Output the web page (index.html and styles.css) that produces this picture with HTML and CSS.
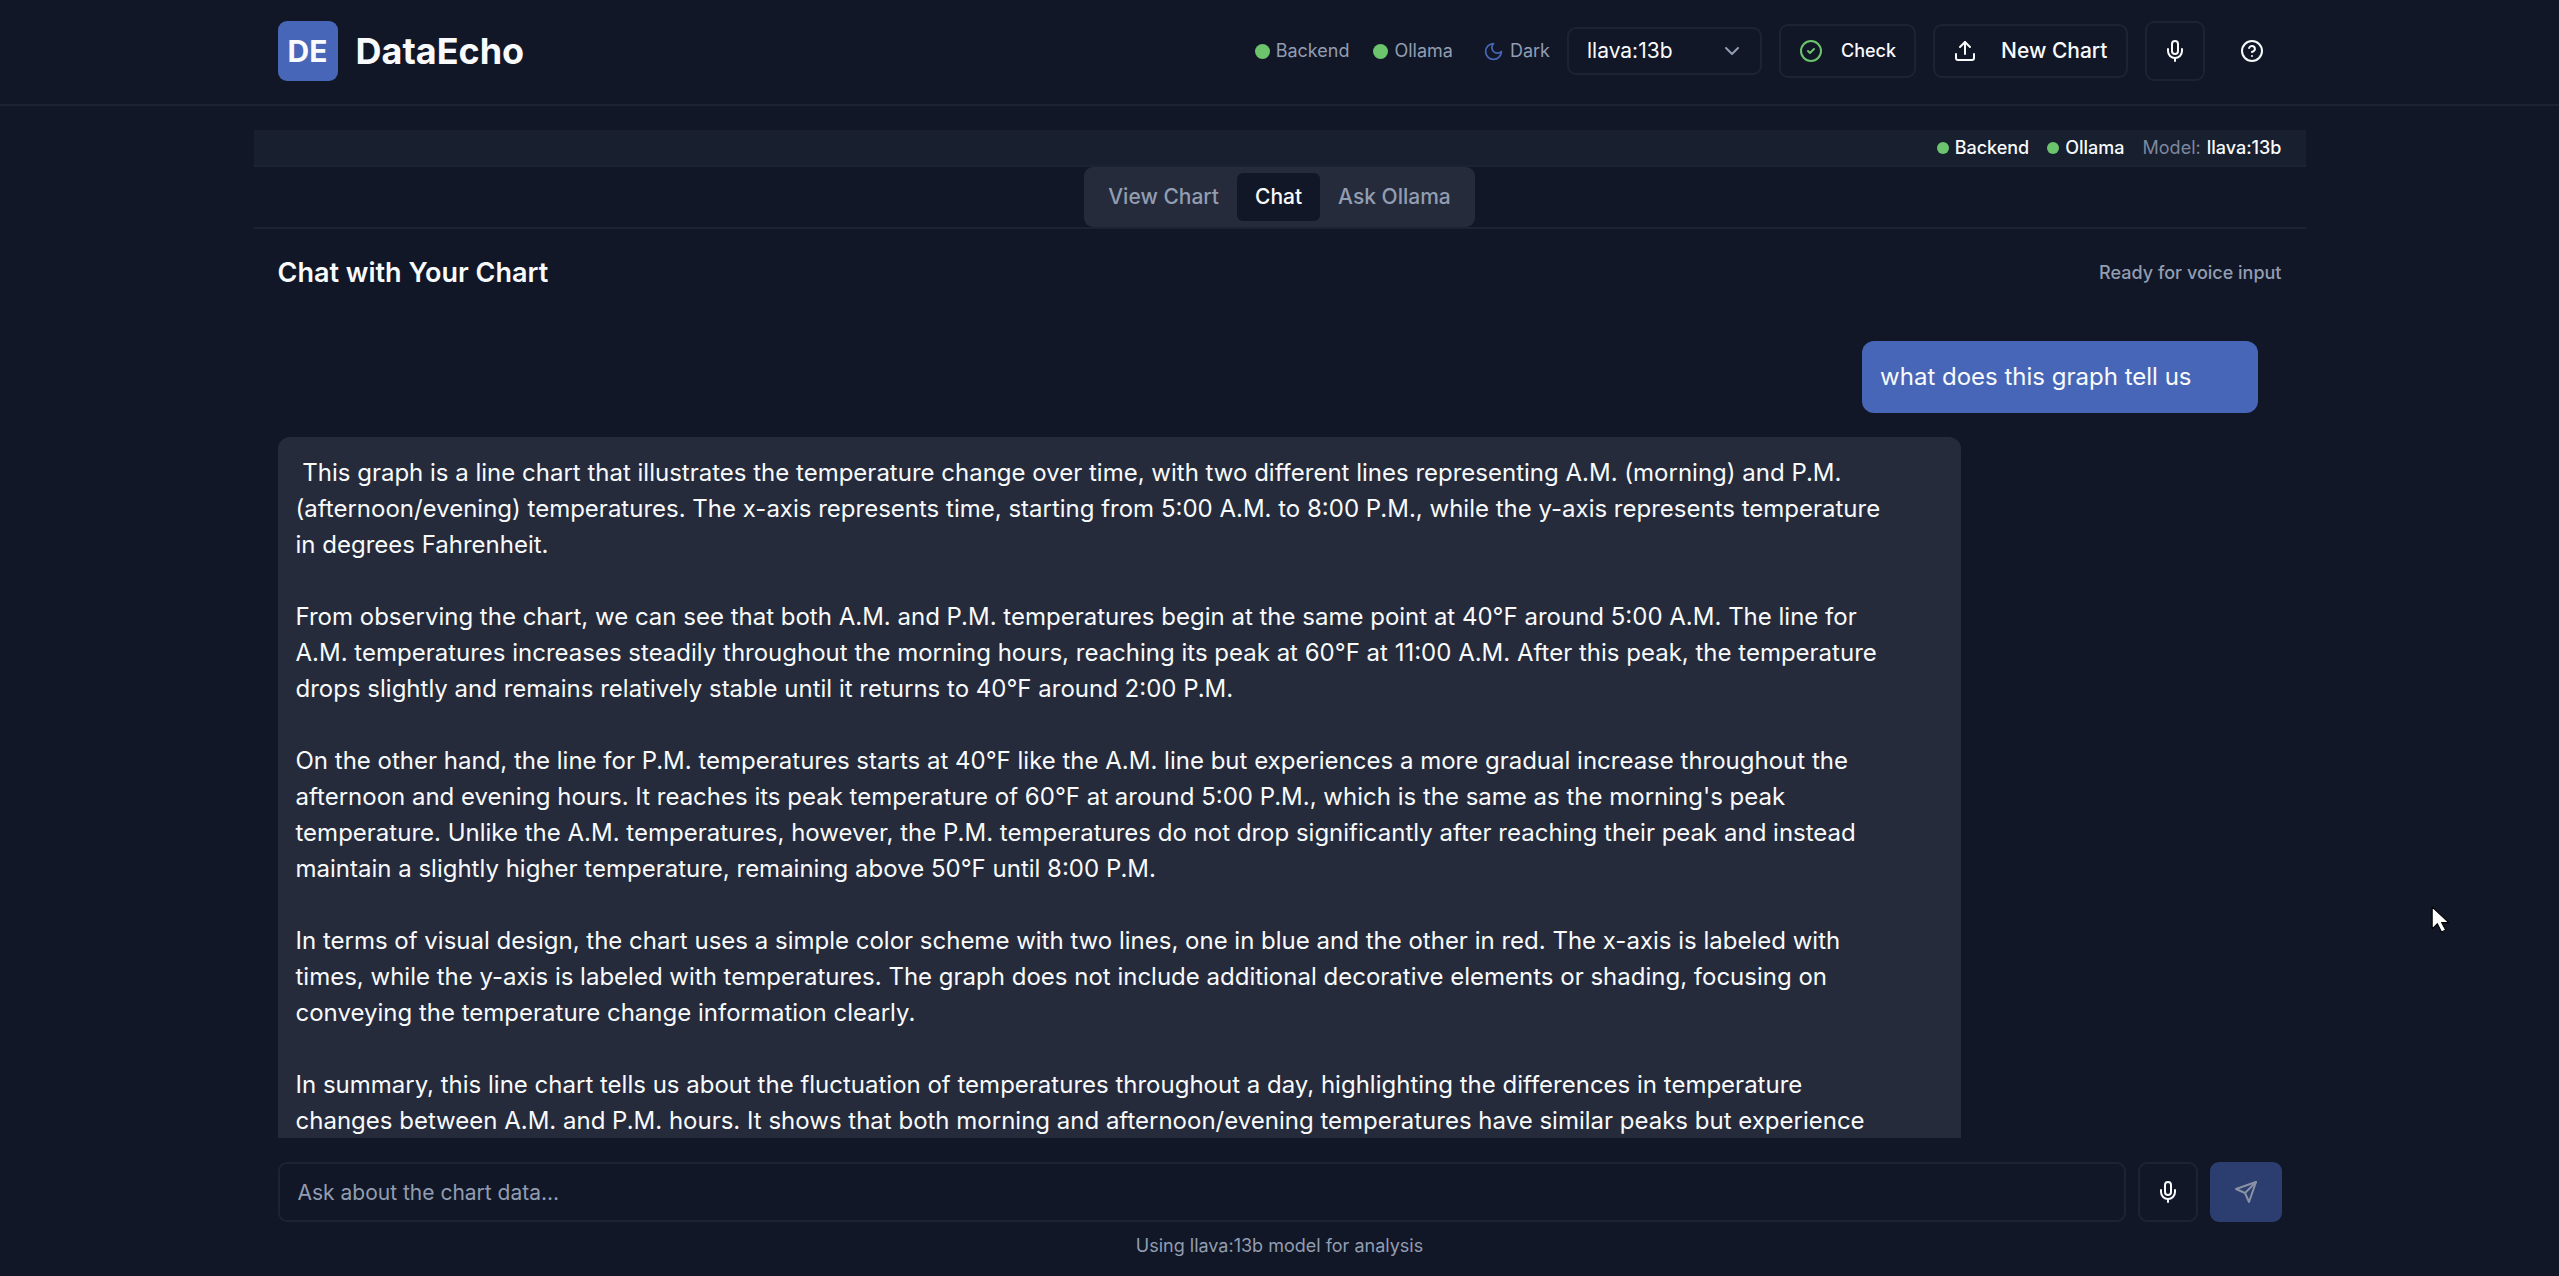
FILE: index.html
```html
<!DOCTYPE html>
<html lang="en">
<head>
<meta charset="utf-8">
<meta name="viewport" content="width=device-width, initial-scale=1">
<title>DataEcho</title>
<link rel="stylesheet" href="styles.css">
</head>
<body>
<div class="app">
  <header class="topbar">
    <div class="container topbar-inner">
      <div class="brand">
        <div class="brand-mark">DE</div>
        <h1 class="brand-name">DataEcho</h1>
      </div>
      <div class="tools">
        <div class="indicators">
          <span class="indicator"><span class="dot"></span>Backend</span>
          <span class="indicator"><span class="dot"></span>Ollama</span>
          <button class="theme" type="button">
            <svg class="icon-sm" viewBox="0 0 24 24"><path d="M12 3a6 6 0 0 0 9 9 9 9 0 1 1-9-9Z"/></svg>
            Dark
          </button>
        </div>
        <div class="select">
          <select class="select-field" aria-label="Model"><option>llava:13b</option></select>
          <svg class="select-arrow" viewBox="0 0 24 24"><path d="m6 9 6 6 6-6"/></svg>
        </div>
        <button class="btn btn-check" type="button">
          <svg class="icon icon-ok" viewBox="0 0 24 24"><circle cx="12" cy="12" r="10"/><path d="m9 12 2 2 4-4"/></svg>
          Check
        </button>
        <button class="btn btn-upload" type="button">
          <svg class="icon" viewBox="0 0 24 24"><path d="M21 15v4a2 2 0 0 1-2 2H5a2 2 0 0 1-2-2v-4"/><path d="m17 8-5-5-5 5"/><path d="M12 3v12"/></svg>
          New Chart
        </button>
        <button class="btn btn-icon" type="button" aria-label="Voice commands">
          <svg class="icon" viewBox="0 0 24 24"><path d="M12 2a3 3 0 0 0-3 3v7a3 3 0 0 0 6 0V5a3 3 0 0 0-3-3Z"/><path d="M19 10v2a7 7 0 0 1-14 0v-2"/><path d="M12 19v3"/></svg>
        </button>
        <button class="btn btn-icon btn-ghost" type="button" aria-label="Help">
          <svg class="icon" viewBox="0 0 24 24"><circle cx="12" cy="12" r="10"/><path d="M9.09 9a3 3 0 0 1 5.83 1c0 2-3 3-3 3"/><path d="M12 17h.01"/></svg>
        </button>
      </div>
    </div>
  </header>

  <main class="container main">
    <div class="statusbar">
      <span class="status"><span class="dot dot-sm"></span>Backend</span>
      <span class="status"><span class="dot dot-sm"></span>Ollama</span>
      <span class="status"><span class="status-label">Model:</span>llava:13b</span>
    </div>
    <div class="tabs">
      <div class="tablist" role="tablist">
        <button class="tab" type="button" role="tab">View Chart</button>
        <button class="tab tab-active" type="button" role="tab" aria-selected="true">Chat</button>
        <button class="tab" type="button" role="tab">Ask Ollama</button>
      </div>
    </div>
    <section class="chat">
      <div class="chat-head">
        <h2 class="chat-title">Chat with Your Chart</h2>
        <span class="voice-state">Ready for voice input</span>
      </div>
      <div class="messages">
        <div class="message message-user">what does this graph tell us</div>
        <div class="message message-bot"> This graph is a line chart that illustrates the temperature change over time, with two different lines representing A.M. (morning) and P.M. (afternoon/evening) temperatures. The x-axis represents time, starting from 5:00 A.M. to 8:00 P.M., while the y-axis represents temperature in degrees Fahrenheit.

From observing the chart, we can see that both A.M. and P.M. temperatures begin at the same point at 40°F around 5:00 A.M. The line for A.M. temperatures increases steadily throughout the morning hours, reaching its peak at 60°F at 11:00 A.M. After this peak, the temperature drops slightly and remains relatively stable until it returns to 40°F around 2:00 P.M.

On the other hand, the line for P.M. temperatures starts at 40°F like the A.M. line but experiences a more gradual increase throughout the afternoon and evening hours. It reaches its peak temperature of 60°F at around 5:00 P.M., which is the same as the morning's peak temperature. Unlike the A.M. temperatures, however, the P.M. temperatures do not drop significantly after reaching their peak and instead maintain a slightly higher temperature, remaining above 50°F until 8:00 P.M.

In terms of visual design, the chart uses a simple color scheme with two lines, one in blue and the other in red. The x-axis is labeled with times, while the y-axis is labeled with temperatures. The graph does not include additional decorative elements or shading, focusing on conveying the temperature change information clearly.

In summary, this line chart tells us about the fluctuation of temperatures throughout a day, highlighting the differences in temperature changes between A.M. and P.M. hours. It shows that both morning and afternoon/evening temperatures have similar peaks but experience</div>
      </div>
      <form class="composer">
        <input class="prompt" type="text" placeholder="Ask about the chart data..." aria-label="Ask about the chart data">
        <button class="btn btn-icon" type="button" aria-label="Voice input">
          <svg class="icon" viewBox="0 0 24 24"><path d="M12 2a3 3 0 0 0-3 3v7a3 3 0 0 0 6 0V5a3 3 0 0 0-3-3Z"/><path d="M19 10v2a7 7 0 0 1-14 0v-2"/><path d="M12 19v3"/></svg>
        </button>
        <button class="btn btn-send" type="submit" aria-label="Send" disabled>
          <svg class="icon" viewBox="0 0 24 24"><path d="m22 2-7 20-4-9-9-4Z"/><path d="M22 2 11 13"/></svg>
        </button>
      </form>
      <p class="footnote">Using llava:13b model for analysis</p>
    </section>
  </main>
</div>
<svg class="pointer" viewBox="0 0 18 26" aria-hidden="true"><path d="M1 1v21l5-5 4 8 4-2-4-7h7Z"/></svg>
</body>
</html>
```
FILE: styles.css
```css
:root {
  --bg: #111726;
  --bar: #181f2e;
  --muted: #252b3b;
  --line: #1c2333;
  --text: #f8fafc;
  --text-muted: #929db2;
  --primary: #4866b7;
  --ok: #6cc46c;
}

* { box-sizing: border-box; }

body {
  margin: 0;
  background: var(--bg);
  color: var(--text);
  font: 24px/36px Inter, "Liberation Sans", sans-serif;
}

button, input, select { font: inherit; color: inherit; }
h1, h2, p { margin: 0; }

.app {
  display: flex;
  flex-direction: column;
  height: 100vh;
}

.container {
  width: 100%;
  max-width: 2100px;
  margin: 0 auto;
}

.topbar { border-bottom: 2px solid var(--line); }

.topbar-inner {
  display: flex;
  align-items: center;
  justify-content: space-between;
  padding: 21px 48px 23px;
}

.brand {
  display: flex;
  align-items: center;
  gap: 18px;
}

.brand-mark {
  display: grid;
  place-items: center;
  width: 60px;
  height: 60px;
  border-radius: 9px;
  background: var(--primary);
  font-size: 30px;
  font-weight: 700;
}

.brand-name {
  font-size: 36px;
  font-weight: 700;
}

.tools {
  display: flex;
  align-items: center;
  gap: 17px;
}

.indicators {
  display: flex;
  align-items: center;
  gap: 24px;
  color: var(--text-muted);
  font-size: 18px;
  line-height: 24px;
}

.indicator, .theme {
  display: flex;
  align-items: center;
  gap: 6px;
}

.theme {
  margin-left: 6px;
  padding: 0;
  border: 0;
  background: none;
}

.dot {
  width: 15px;
  height: 15px;
  border-radius: 50%;
  background: var(--ok);
}

.dot-sm {
  width: 12px;
  height: 12px;
}

svg {
  fill: none;
  stroke: currentColor;
  stroke-width: 2;
  stroke-linecap: round;
  stroke-linejoin: round;
}

.icon {
  width: 24px;
  height: 24px;
}

.icon-ok { color: var(--ok); }

.icon-sm {
  width: 21px;
  height: 21px;
  color: var(--primary);
}

.select {
  display: grid;
  align-items: center;
  width: 195px;
}

.select-field, .select-arrow { grid-area: 1 / 1; }

.select-field {
  height: 48px;
  padding: 0 18px;
  border: 2px solid var(--line);
  border-radius: 9px;
  background: var(--bg);
  font-size: 21px;
  appearance: none;
}

.select-arrow {
  justify-self: end;
  width: 24px;
  height: 24px;
  margin-right: 18px;
  color: var(--text-muted);
  pointer-events: none;
}

.btn {
  display: flex;
  align-items: center;
  justify-content: center;
  height: 54px;
  padding: 0 18px;
  border: 2px solid var(--line);
  border-radius: 9px;
  background: none;
  font-size: 21px;
  font-weight: 500;
}

.btn-check {
  gap: 18px;
  font-size: 18px;
}

.btn-upload { gap: 24px; }

.btn-icon {
  width: 60px;
  height: 60px;
  padding: 0;
}

.btn-ghost { border-color: transparent; }

.main {
  display: flex;
  flex: 1;
  flex-direction: column;
  min-height: 0;
  padding: 24px 24px 0;
}

.statusbar {
  display: flex;
  justify-content: flex-end;
  gap: 18px;
  padding: 6px 24px 5px;
  border-bottom: 2px solid var(--line);
  background: var(--bar);
  font-size: 18px;
  font-weight: 500;
  line-height: 24px;
}

.status {
  display: flex;
  align-items: center;
  gap: 6px;
}

.status-label {
  color: #7d889e;
  font-weight: 400;
}

.tabs {
  display: flex;
  justify-content: center;
  border-bottom: 2px solid var(--line);
}

.tablist {
  display: flex;
  padding: 6px;
  border-radius: 9px;
  background: var(--muted);
}

.tab {
  height: 48px;
  padding: 0 18px;
  border: 0;
  border-radius: 6px;
  background: none;
  color: var(--text-muted);
  font-size: 21px;
  font-weight: 500;
}

.tab-active {
  background: var(--bg);
  color: var(--text);
}

.chat {
  display: flex;
  flex: 1;
  flex-direction: column;
  min-height: 0;
  padding: 24px;
  padding-bottom: 18px;
}

.chat-head {
  display: flex;
  align-items: center;
  justify-content: space-between;
  padding-bottom: 24px;
}

.chat-title {
  font-size: 27px;
  font-weight: 600;
  line-height: 40px;
}

.voice-state {
  color: var(--text-muted);
  font-size: 18px;
  font-weight: 500;
}

.messages {
  display: flex;
  flex: 1;
  flex-direction: column;
  gap: 24px;
  min-height: 0;
  padding: 24px 24px 0 0;
  overflow: hidden;
}

.message {
  flex: none;
  max-width: 85%;
  padding: 18px 66px 18px 18px;
  border-radius: 12px;
  white-space: pre-wrap;
}

.message-user {
  align-self: flex-end;
  background: var(--primary);
}

.message-bot {
  align-self: flex-start;
  background: var(--muted);
}

.composer {
  display: flex;
  gap: 12px;
  padding-top: 24px;
}

.prompt {
  flex: 1;
  height: 60px;
  padding: 0 18px;
  border: 2px solid var(--line);
  border-radius: 9px;
  background: none;
  font-size: 21px;
}

.prompt::placeholder {
  color: var(--text-muted);
  opacity: 1;
}

.btn-send {
  width: 72px;
  height: 60px;
  border: 0;
  background: #2c3e6f;
  color: #8b91a5;
}

.footnote {
  padding-top: 12px;
  color: var(--text-muted);
  font-size: 18px;
  line-height: 24px;
  text-align: center;
}

.pointer {
  position: fixed;
  top: 71%;
  left: 95%;
  width: 19px;
  height: 27px;
  fill: #fff;
  stroke: #000;
  stroke-width: 1;
  pointer-events: none;
}
```
